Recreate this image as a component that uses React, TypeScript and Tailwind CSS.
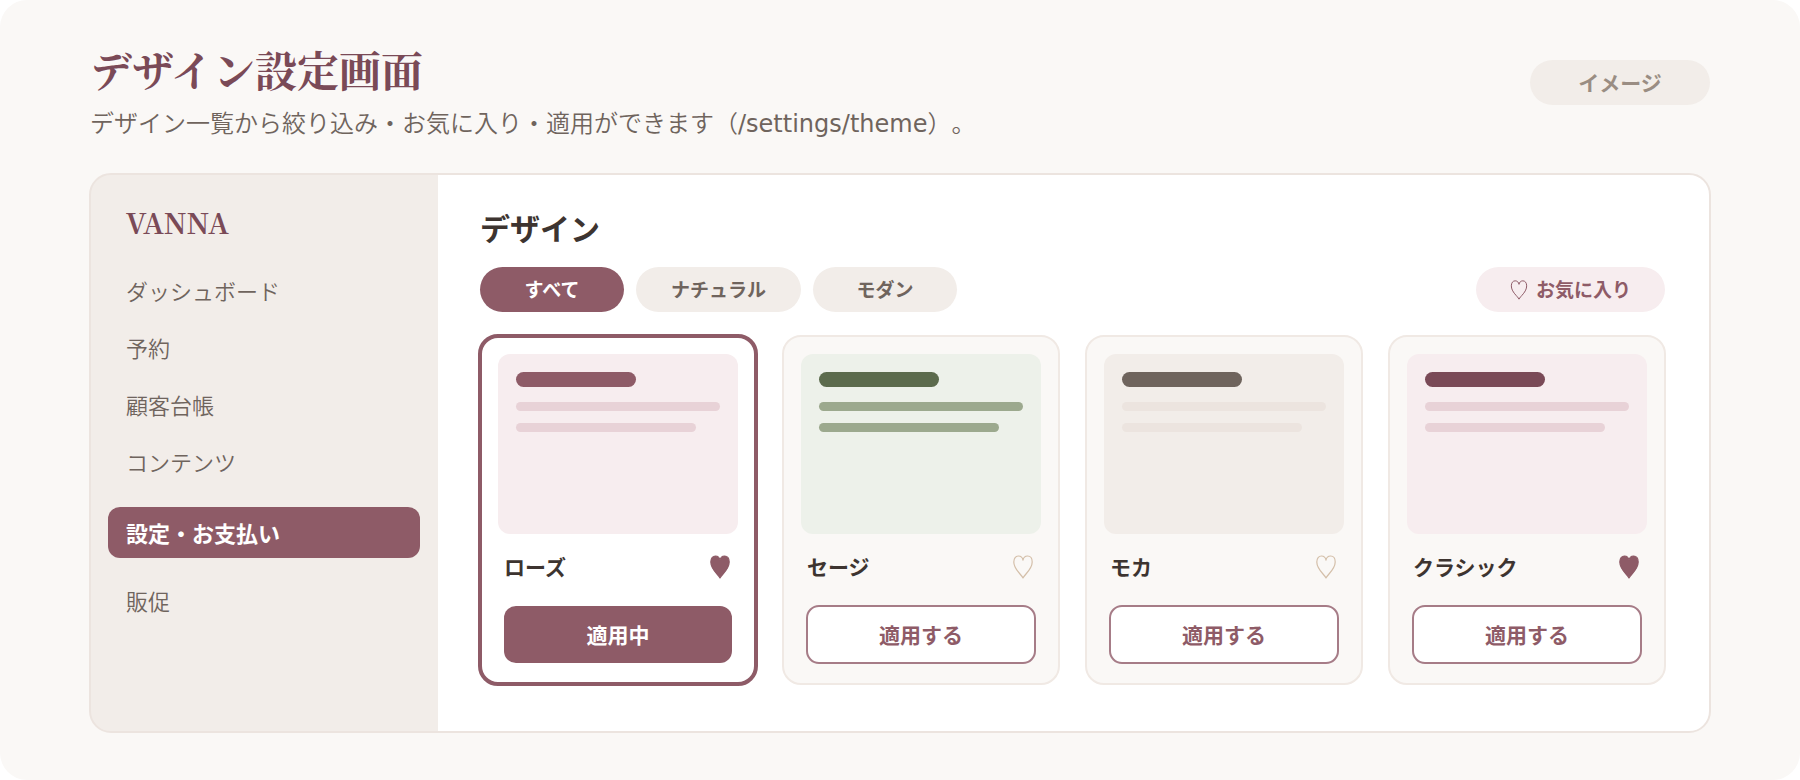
type Design = {
    name: string;
    favorite: boolean;
    active: boolean;
    preview: string;
    heading: string;
    line: string;
};

const navItems = ["ダッシュボード", "予約", "顧客台帳", "コンテンツ", "設定・お支払い", "販促"];
const activeNav = "設定・お支払い";

const designs: Design[] = [
    { name: "ローズ", favorite: true, active: true, preview: "bg-[#f7edef]", heading: "bg-[#8e5b67]", line: "bg-[#e8d2d7]" },
    { name: "セージ", favorite: false, active: false, preview: "bg-[#edf1ea]", heading: "bg-[#5c6b4d]", line: "bg-[#9ca98e]" },
    { name: "モカ", favorite: false, active: false, preview: "bg-[#f2ede9]", heading: "bg-[#6f645d]", line: "bg-[#ece4df]" },
    { name: "クラシック", favorite: true, active: false, preview: "bg-[#f7edef]", heading: "bg-[#7a4a57]", line: "bg-[#e8d2d7]" },
];

function Heart({ filled, className }: { filled?: boolean; className: string }) {
    return (
        <svg
            viewBox="0 0 20 24"
            className={className}
            fill={filled ? "currentColor" : "none"}
            stroke="currentColor"
            strokeWidth="1.2"
            strokeLinejoin="round"
            aria-hidden="true"
        >
            <path d="M10 23C8.5 19.500 .8 14.500 .8 7C.8 3.200 2.800 1 5.400 1C7.800 1 9.600 2.700 10 5.200C10.400 2.700 12.200 1 14.600 1C17.200 1 19.200 3.200 19.200 7C19.200 14.500 11.500 19.500 10 23Z" />
        </svg>
    );
}

function Sidebar() {
    return (
        <aside className="w-[348px] shrink-0 bg-[#f2ede9] px-[18px] pt-7">
            <p className="px-[18px] font-['Noto_Serif_CJK_JP','Liberation_Serif',serif] text-[28px] leading-10 font-bold text-[#7a4a57]">
                VANNA
            </p>
            <nav className="mt-8 flex flex-col gap-6">
                {navItems.map((item) => (
                    <a
                        key={item}
                        href="#"
                        className={
                            item === activeNav
                                ? "mt-[5px] mb-0.5 rounded-xl bg-[#8e5b67] px-[18px] py-[9px] text-[22px] leading-[33px] font-semibold text-white"
                                : "px-[18px] text-[22px] leading-[33px] font-[350] text-[#6f645d]"
                        }
                    >
                        {item}
                    </a>
                ))}
            </nav>
        </aside>
    );
}

function DesignCard({ design }: { design: Design }) {
    return (
        <article
            className={
                design.active
                    ? "rounded-[18px] bg-white px-[18px] pt-[18px] pb-[21px] outline-4 -outline-offset-2 outline-[#8e5b67]"
                    : "rounded-[18px] bg-[#faf8f6] px-[18px] pt-[18px] pb-[21px] outline-2 -outline-offset-1 outline-[#f0e9e4]"
            }
        >
            <div className={`h-[180px] rounded-xl p-[18px] ${design.preview}`}>
                <div className={`h-[15px] w-[120px] rounded-full ${design.heading}`} />
                <div className={`mt-[15px] h-[9px] rounded-full ${design.line}`} />
                <div className={`mt-3 h-[9px] w-[180px] rounded-full ${design.line}`} />
            </div>
            <div className="px-1.5">
                <div className="flex h-[72px] items-center justify-between pb-1.5">
                    <h3 className="text-[21px] font-semibold text-[#3d3430]">{design.name}</h3>
                    <button
                        type="button"
                        aria-label={`${design.name}をお気に入り`}
                        aria-pressed={design.favorite}
                        className={design.favorite ? "text-[#8e5b67]" : "text-[#d4bfa9]"}
                    >
                        <Heart filled={design.favorite} className="mr-0.5 h-6 w-5" />
                    </button>
                </div>
                <button
                    type="button"
                    className={
                        design.active
                            ? "h-[57px] w-full rounded-xl bg-[#8e5b67] text-[21px] font-semibold text-white"
                            : "h-[57px] w-full rounded-xl bg-white text-[21px] font-semibold text-[#8e5b67] outline-2 -outline-offset-1 outline-[#a67c87]"
                    }
                >
                    {design.active ? "適用中" : "適用する"}
                </button>
            </div>
        </article>
    );
}

export default function App() {
    return (
        <div className="rounded-[27px] bg-[#faf8f6] px-[90px] pt-[42px] pb-12 font-['Noto_Sans_CJK_JP',sans-serif]">
            <header className="flex items-start justify-between">
                <div>
                    <h1 className="font-['Noto_Serif_CJK_JP','Liberation_Serif',serif] text-[42px] leading-[54px] font-bold text-[#7a4a57]">
                        デザイン設定画面
                    </h1>
                    <p className="mt-2 text-[24px] leading-9 font-[350] text-[#6f645d] [text-spacing-trim:space-all]">
                        デザイン一覧から絞り込み・お気に入り・適用ができます（
                        <span className="font-['DejaVu_Sans',sans-serif] font-normal">/settings/theme</span>）。
                    </p>
                </div>
                <span className="mt-[18px] flex h-[45px] w-[180px] items-center justify-center rounded-full bg-[#f2ede9] text-[21px] font-semibold text-[#9a8d83]">
                    イメージ
                </span>
            </header>

            <div className="mt-8 flex overflow-hidden rounded-[21px] bg-white outline-2 -outline-offset-1 outline-[#ece4df]">
                <Sidebar />
                <main className="min-w-0 flex-1 px-[42px] pt-8 pr-[45px] pb-12">
                    <h2 className="text-[30px] leading-[43px] font-semibold text-[#3d3430]">デザイン</h2>
                    <div className="mt-[18px] flex gap-3">
                        <button type="button" className="h-[45px] w-36 rounded-full bg-[#8e5b67] text-[19px] font-semibold text-white">
                            すべて
                        </button>
                        <button type="button" className="h-[45px] w-[165px] rounded-full bg-[#f2ede9] text-[19px] font-semibold text-[#6f645d]">
                            ナチュラル
                        </button>
                        <button type="button" className="h-[45px] w-36 rounded-full bg-[#f2ede9] text-[19px] font-semibold text-[#6f645d]">
                            モダン
                        </button>
                        <button
                            type="button"
                            className="ml-auto flex h-[45px] w-[189px] items-center justify-center gap-2 rounded-full bg-[#f7edef] text-[19px] font-semibold text-[#8e5b67]"
                        >
                            <Heart className="h-5 w-[18px]" />
                            お気に入り
                        </button>
                    </div>
                    <div className="mt-6 grid grid-cols-4 gap-[27px]">
                        {designs.map((design) => (
                            <DesignCard key={design.name} design={design} />
                        ))}
                    </div>
                </main>
            </div>
        </div>
    );
}
